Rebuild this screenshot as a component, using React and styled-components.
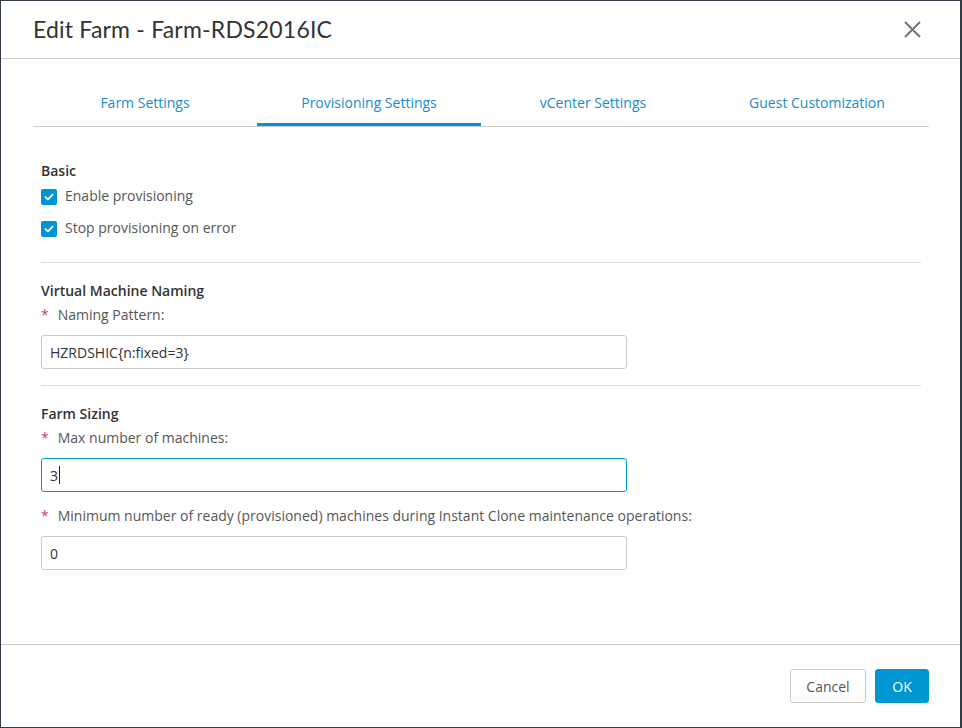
import React from "react";
import styled, { createGlobalStyle } from "styled-components";

const GlobalStyle = createGlobalStyle`
  html, body {
    margin: 0;
    padding: 0;
    background: #323d47;
  }
  body {
    font-family: "Open Sans", "Noto Sans", sans-serif;
    -webkit-font-smoothing: antialiased;
  }
  * {
    box-sizing: border-box;
  }
`;

const tabs = [
  "Farm Settings",
  "Provisioning Settings",
  "vCenter Settings",
  "Guest Customization",
];

function App() {
  return (
    <>
      <GlobalStyle />
      <Modal>
        <Header>
          <Title>Edit Farm - Farm-RDS2016IC</Title>
          <CloseButton aria-label="Close">
            <svg width="17" height="17" viewBox="0 0 17 17">
              <path
                d="M1 1 L16 16 M16 1 L1 16"
                stroke="#747474"
                strokeWidth="2"
                fill="none"
              />
            </svg>
          </CloseButton>
        </Header>

        <TabBar>
          {tabs.map((t, i) => (
            <Tab key={t} $active={i === 1}>
              {t}
            </Tab>
          ))}
        </TabBar>

        <Body>
          <Section $first>
            <SectionTitle>Basic</SectionTitle>
            <CheckList>
              <CheckRow>
                <CheckBox>
                  <CheckMark />
                </CheckBox>
                <CheckLabel>Enable provisioning</CheckLabel>
              </CheckRow>
              <CheckRow>
                <CheckBox>
                  <CheckMark />
                </CheckBox>
                <CheckLabel>Stop provisioning on error</CheckLabel>
              </CheckRow>
            </CheckList>
          </Section>

          <Section>
            <SectionTitle>Virtual Machine Naming</SectionTitle>
            <FieldLabel>
              <Required>*</Required>Naming Pattern:
            </FieldLabel>
            <Field>HZRDSHIC{"{n:fixed=3}"}</Field>
          </Section>

          <Section $last>
            <SectionTitle>Farm Sizing</SectionTitle>
            <FieldLabel>
              <Required>*</Required>Max number of machines:
            </FieldLabel>
            <Field $focused>
              3<Caret />
            </Field>
            <FieldLabel $spaced>
              <Required>*</Required>Minimum number of ready (provisioned)
              machines during Instant Clone maintenance operations:
            </FieldLabel>
            <Field>0</Field>
          </Section>
        </Body>

        <Footer>
          <Button>Cancel</Button>
          <Button $primary>OK</Button>
        </Footer>
      </Modal>
    </>
  );
}

function CheckMark() {
  return (
    <svg width="10" height="8" viewBox="0 0 10 8">
      <path
        d="M1.5 4.2 L3.9 6.4 L8.6 1.6"
        stroke="#fff"
        strokeWidth="1.8"
        fill="none"
        strokeLinecap="round"
        strokeLinejoin="round"
      />
    </svg>
  );
}

const Modal = styled.div`
  margin: 1px 0 0 1px;
  width: 959px;
  height: 726px;
  background: #fff;
  display: flex;
  flex-direction: column;
`;

const Header = styled.div`
  height: 58px;
  border-bottom: 1px solid #cccccc;
  display: flex;
  align-items: center;
  justify-content: space-between;
  padding: 0 39px 1px 32px;
`;

const Title = styled.h3`
  margin: 0;
  font-family: "Lato", "Open Sans", sans-serif;
  font-weight: 400;
  font-size: 23px;
  color: #333333;
  letter-spacing: 0.2px;
`;

const CloseButton = styled.button`
  border: none;
  background: none;
  padding: 0;
  display: flex;
  cursor: pointer;
`;

const TabBar = styled.div`
  display: grid;
  grid-template-columns: repeat(4, 1fr);
  margin: 23px 31px 0 32px;
  border-bottom: 1px solid #cccccc;
`;

const Tab = styled.div`
  height: 44px;
  display: flex;
  align-items: center;
  justify-content: center;
  font-size: 14px;
  color: #1a8bcb;
  border-bottom: 3px solid ${(p) => (p.$active ? "#0a8fd0" : "transparent")};
`;

const Body = styled.div`
  flex: 1;
  padding: 34px 39px 0 40px;
`;

const Section = styled.div`
  padding-top: ${(p) => (p.$first ? "0" : "18px")};
  padding-bottom: ${(p) => (p.$first ? "25px" : "16px")};
  border-bottom: ${(p) => (p.$last ? "none" : "1px solid #e0e0e0")};
`;

const SectionTitle = styled.div`
  font-size: 14px;
  font-weight: 600;
  line-height: 20px;
  color: #333333;
`;

const CheckList = styled.div`
  display: flex;
  flex-direction: column;
  gap: 16px;
  margin-top: 8px;
`;

const CheckRow = styled.label`
  display: flex;
  align-items: center;
  height: 16px;
  gap: 8px;
`;

const CheckBox = styled.span`
  width: 16px;
  height: 16px;
  border-radius: 2px;
  background: #0094d2;
  display: flex;
  align-items: center;
  justify-content: center;
`;

const CheckLabel = styled.span`
  font-size: 14px;
  color: #565656;
  line-height: 16px;
  margin-top: -3px;
`;

const FieldLabel = styled.div`
  margin-top: ${(p) => (p.$spaced ? "14px" : "4px")};
  font-size: 14px;
  line-height: 20px;
  color: #565656;
`;

const Required = styled.span`
  color: #c2485b;
  margin-right: 9px;
`;

const Field = styled.div`
  margin-top: 10px;
  width: 586px;
  height: 34px;
  border: 1px solid ${(p) => (p.$focused ? "#0094d2" : "#cccccc")};
  border-radius: 3px;
  padding: 0 8px;
  display: flex;
  align-items: center;
  font-size: 14px;
  color: #333333;
`;

const Caret = styled.span`
  display: inline-block;
  width: 1px;
  height: 18px;
  background: #222;
  margin-left: 1px;
`;

const Footer = styled.div`
  height: 83px;
  border-top: 1px solid #cccccc;
  display: flex;
  justify-content: flex-end;
  align-items: flex-start;
  gap: 9px;
  padding: 24px 31px 0 0;
`;

const Button = styled.button`
  height: 34px;
  min-width: ${(p) => (p.$primary ? "54px" : "76px")};
  padding: 0 ${(p) => (p.$primary ? "16px" : "15px")};
  border-radius: 3px;
  font-family: "Open Sans", sans-serif;
  font-size: 14px;
  border: 1px solid ${(p) => (p.$primary ? "#0095d3" : "#cccccc")};
  background: ${(p) => (p.$primary ? "#0095d3" : "#ffffff")};
  color: ${(p) => (p.$primary ? "#ffffff" : "#565656")};
  cursor: pointer;
`;

export default App;
